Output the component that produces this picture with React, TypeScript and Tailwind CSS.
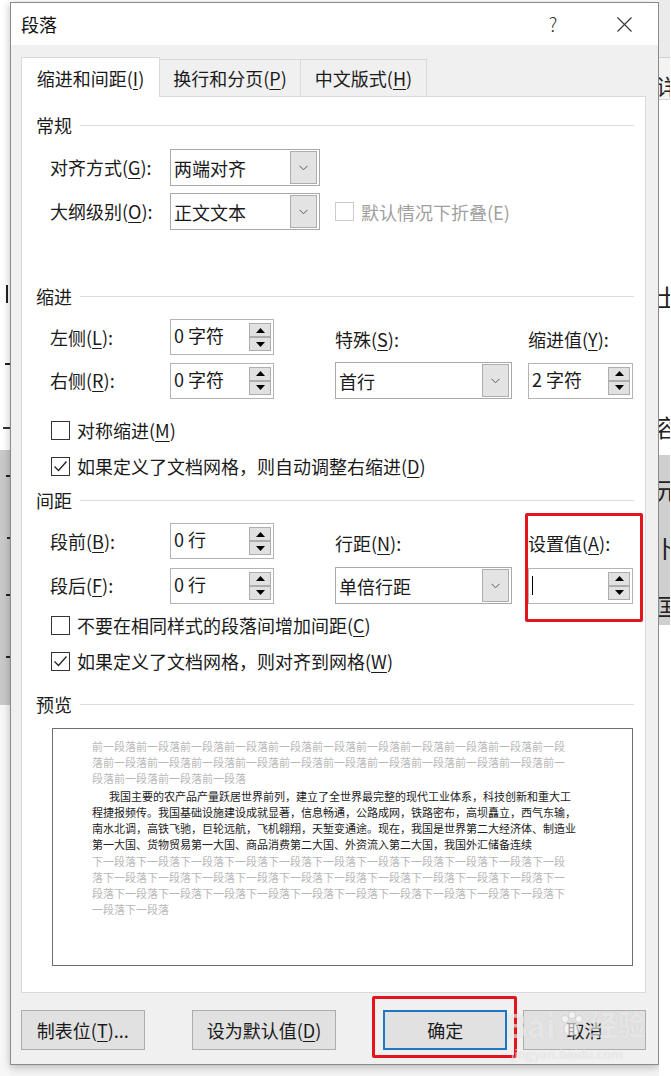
import React from "react";

const T = "text-[18px] leading-[24px] text-[#1a1a1a]";

// 带下划线快捷键的标签，例如 对齐方式(G):
function Lbl({ t, k, colon = true }: { t: string; k: string; colon?: boolean }) {
  return (
    <span className={`${T} whitespace-nowrap`}>
      {t}(<u className="decoration-1 underline-offset-[3px]">{k}</u>){colon ? ":" : ""}
    </span>
  );
}

function Chevron() {
  return (
    <svg width="9" height="6" viewBox="0 0 9 6">
      <path d="M0.5 0.8 L4.5 4.8 L8.5 0.8" stroke="#5a5a5a" strokeWidth="1" fill="none" />
    </svg>
  );
}

function Select({ value, className }: { value: string; className: string }) {
  return (
    <div className={`flex h-[37px] items-center border border-[#a9a9a9] bg-white pl-[3px] pr-[2px] ${className}`}>
      <span className={`flex-1 ${T}`}>{value}</span>
      <div className="flex h-[33px] w-[27px] items-center justify-center border border-[#adadad] bg-[#e3e3e3]">
        <Chevron />
      </div>
    </div>
  );
}

function Spin({ value, className }: { value?: string; className: string }) {
  return (
    <div className={`flex h-[36px] items-center border border-[#b4b4b4] bg-white pl-[3px] pr-[2px] ${className}`}>
      <div className="flex flex-1 items-center">
        {value === undefined ? (
          <span className="h-[19px] w-px bg-black" />
        ) : (
          <span className={`${T} pb-[4px]`}>{value}</span>
        )}
      </div>
      <div className="flex flex-col">
        <div className="flex h-[14px] w-[22px] items-center justify-center border border-[#adadad] bg-[#e1e1e1]">
          <svg width="9" height="5" viewBox="0 0 9 5">
            <polygon points="0,5 4.5,0 9,5" fill="#000" />
          </svg>
        </div>
        <div className="flex h-[14px] w-[22px] items-center justify-center border border-[#adadad] bg-[#e1e1e1]">
          <svg width="9" height="5" viewBox="0 0 9 5">
            <polygon points="0,0 9,0 4.5,5" fill="#000" />
          </svg>
        </div>
      </div>
    </div>
  );
}

function Check({ checked, children, className = "" }: { checked?: boolean; children: React.ReactNode; className?: string }) {
  return (
    <div className={`flex h-[24px] items-center pl-[15px] ${className}`}>
      <div className="flex h-[19px] w-[19px] items-center justify-center border border-[#333333] bg-white">
        {checked && (
          <svg width="15" height="13" viewBox="0 0 15 13">
            <path d="M1.5 6.5 L5.5 10.5 L13.5 1.5" stroke="#222" strokeWidth="1.3" fill="none" />
          </svg>
        )}
      </div>
      <span className="ml-[7px]">{children}</span>
    </div>
  );
}

function Section({ title, className }: { title: string; className: string }) {
  return (
    <div className={`flex h-[24px] items-center ${className}`}>
      <span className={T}>{title}</span>
      <div className="ml-[8px] h-px flex-1 bg-[#dcdcdc]" />
    </div>
  );
}

function Button({ children, className }: { children: React.ReactNode; className: string }) {
  return (
    <div className={`flex h-[40px] items-center justify-center border border-[#adadad] bg-[#e1e1e1] ${T} ${className}`}>
      {children}
    </div>
  );
}

const before = "前一段落".repeat(25);
const after = "下一段落".repeat(34);
const previewGrey = "text-[11px] leading-[16px] text-[#b8b8b8] whitespace-nowrap";
const previewBlack = "text-[11px] leading-[16px] text-[#222222] whitespace-nowrap";

export default function App() {
  return (
    <div className="flex h-[1076px] w-[671px] overflow-hidden bg-white font-['Noto_Sans_CJK_SC','Liberation_Sans',sans-serif]">
      {/* 左侧背景文档 */}
      <div className="flex w-[10px] flex-col">
        <div className="h-[450px] bg-white pt-[285px]">
          <div className="ml-[6px] h-[18px] w-[2px] bg-[#222]" />
          <div className="ml-[5px] mt-[60px] h-[2px] w-[5px] bg-[#222]" />
          <div className="ml-[3px] mt-[62px] h-[2px] w-[7px] bg-[#333]" />
        </div>
        <div className="h-[255px] bg-[#c9c9c9] pt-[25px]">
          <div className="ml-[6px] h-[2px] w-[4px] bg-[#222]" />
          <div className="ml-[7px] mt-[60px] h-[2px] w-[3px] bg-[#222]" />
          <div className="ml-[6px] mt-[55px] h-[2px] w-[4px] bg-[#222]" />
          <div className="ml-[6px] mt-[60px] h-[2px] w-[4px] bg-[#222]" />
        </div>
        <div className="flex-1 bg-[#f7f7f7]" />
      </div>

      <div className="flex w-[649px] flex-col bg-[#f3f3f3]">
        <div className="h-[2px] bg-white" />
        {/* 段落对话框 */}
        <div className="h-[1063px] border border-[#8a8a8a] bg-[#f0f0f0] shadow-[0_2px_8px_rgba(0,0,0,0.25)]">
          <div className="flex h-[42px] items-center bg-white pl-[10px] pr-[11px]">
            <span className="text-[18px] leading-[24px] text-[#111]">段落</span>
            <div className="ml-auto flex items-center gap-[25px]">
              <span className="w-[46px] text-center text-[19px] font-light leading-[24px] text-[#333]">?</span>
              <div className="flex w-[46px] justify-center">
                <svg width="15" height="15" viewBox="0 0 15 15">
                  <path d="M0.5 0.5 L14.5 14.5 M14.5 0.5 L0.5 14.5" stroke="#333" strokeWidth="1.1" />
                </svg>
              </div>
            </div>
          </div>

          <div className="pl-[10px] pr-[12px] pt-[12px]">
            <div className="flex h-[39px] items-end">
              <div className="relative z-10 -mb-px flex h-[40px] w-[139px] items-center justify-center border border-b-0 border-[#d9d9d9] bg-white">
                <Lbl t="缩进和间距" k="I" colon={false} />
              </div>
              <div className="flex h-[37px] w-[141px] items-center justify-center border-r border-t border-[#d9d9d9] bg-[#f0f0f0]">
                <Lbl t="换行和分页" k="P" colon={false} />
              </div>
              <div className="flex h-[37px] w-[126px] items-center justify-center border-r border-t border-[#d9d9d9] bg-[#f0f0f0]">
                <Lbl t="中文版式" k="H" colon={false} />
              </div>
            </div>

            <div className="flex h-[897px] flex-col border border-[#d9d9d9] bg-white pl-[14px] pr-[11px]">
              <Section title="常规" className="mt-[16px]" />
              <div className="mt-[12px] flex h-[37px] items-center">
                <div className="w-[134px] pl-[14px]"><Lbl t="对齐方式" k="G" /></div>
                <Select value="两端对齐" className="w-[150px]" />
              </div>
              <div className="mt-[7px] flex h-[37px] items-center">
                <div className="w-[134px] pl-[14px]"><Lbl t="大纲级别" k="O" /></div>
                <Select value="正文文本" className="w-[150px]" />
                <div className="ml-[15px] h-[19px] w-[19px] border border-[#cccccc] bg-white" />
                <span className={`ml-[7px] text-[18px] leading-[24px] text-[#a0a0a0]`}>默认情况下折叠(E)</span>
              </div>

              <Section title="缩进" className="mt-[54px]" />
              <div className="mt-[11px] flex h-[36px] items-center">
                <div className="w-[134px] pl-[14px]"><Lbl t="左侧" k="L" /></div>
                <Spin value="0 字符" className="w-[104px]" />
                <div className="ml-[61px] w-[193px] pt-[4px]"><Lbl t="特殊" k="S" /></div>
                <div className="pt-[4px]"><Lbl t="缩进值" k="Y" /></div>
              </div>
              <div className="mt-[7px] flex h-[37px] items-center">
                <div className="w-[134px] pl-[14px]"><Lbl t="右侧" k="R" /></div>
                <Spin value="0 字符" className="w-[104px]" />
                <Select value="首行" className="ml-[61px] w-[177px]" />
                <Spin value="2 字符" className="ml-[16px] w-[105px]" />
              </div>
              <Check className="mt-[19px]">
                <Lbl t="对称缩进" k="M" colon={false} />
              </Check>
              <Check checked className="mt-[12px]">
                <Lbl t="如果定义了文档网格，则自动调整右缩进" k="D" colon={false} />
              </Check>

              <Section title="间距" className="mt-[10px]" />
              <div className="relative mt-[11px]">
                <div className="flex h-[36px] items-center">
                  <div className="w-[134px] pl-[14px]"><Lbl t="段前" k="B" /></div>
                  <Spin value="0 行" className="w-[104px]" />
                  <div className="ml-[61px] w-[193px] pt-[4px]"><Lbl t="行距" k="N" /></div>
                  <div className="pt-[4px]"><Lbl t="设置值" k="A" /></div>
                </div>
                <div className="mt-[8px] flex h-[37px] items-center">
                  <div className="w-[134px] pl-[14px]"><Lbl t="段后" k="F" /></div>
                  <Spin value="0 行" className="w-[104px]" />
                  <Select value="单倍行距" className="ml-[61px] w-[177px]" />
                  <Spin className="ml-[16px] w-[105px]" />
                </div>
                {/* 红色标注框 */}
                <div className="pointer-events-none absolute left-[489px] top-[-10px] h-[109px] w-[118px] rounded-[2px] border-[3px] border-[#e3141c]" />
              </div>
              <Check className="mt-[9px]">
                <Lbl t="不要在相同样式的段落间增加间距" k="C" colon={false} />
              </Check>
              <Check checked className="mt-[12px]">
                <Lbl t="如果定义了文档网格，则对齐到网格" k="W" colon={false} />
              </Check>

              <Section title="预览" className="mt-[19px]" />
              <div className="ml-[16px] mr-px mt-[12px] h-[238px] border border-[#6e6e6e] bg-white pl-[39px] pt-[9px]">
                <div className={previewGrey}>{before.slice(0, 43)}</div>
                <div className={previewGrey}>{before.slice(43, 86)}</div>
                <div className={previewGrey}>{before.slice(86)}</div>
                <div className={`${previewBlack} mt-[2px] pl-[17px]`}>
                  我国主要的农产品产量跃居世界前列，建立了全世界最完整的现代工业体系，科技创新和重大工
                </div>
                <div className={previewBlack}>程捷报频传。我国基础设施建设成就显著，信息畅通，公路成网，铁路密布，高坝矗立，西气东输，</div>
                <div className={previewBlack}>南水北调，高铁飞驰，巨轮远航，飞机翱翔，天堑变通途。现在，我国是世界第二大经济体、制造业</div>
                <div className={previewBlack}>第一大国、货物贸易第一大国、商品消费第二大国、外资流入第二大国，我国外汇储备连续</div>
                <div className={`${previewGrey} mt-px`}>{after.slice(0, 43)}</div>
                <div className={previewGrey}>{after.slice(43, 86)}</div>
                <div className={previewGrey}>{after.slice(86, 129)}</div>
                <div className={previewGrey}>{after.slice(129)}</div>
              </div>
            </div>

            <div className="mt-[17px] flex h-[40px]">
              <Button className="w-[124px]">
                制表位(<u className="decoration-1 underline-offset-[3px]">T</u>)...
              </Button>
              <Button className="ml-[47px] w-[145px]">
                设为默认值(<u className="decoration-1 underline-offset-[3px]">D</u>)
              </Button>
              <div className="relative ml-[47px] w-[124px]">
                <div className={`flex h-[40px] items-center justify-center border-2 border-[#1f77c4] bg-[#e1e1e1] ${T}`}>确定</div>
                <div className="pointer-events-none absolute -bottom-[8px] -left-[11px] -right-[10px] -top-[14px] rounded-[2px] border-[3px] border-[#e3141c]" />
              </div>
              <div className="relative ml-[16px] w-[123px]">
                <Button className="w-[123px]">取消</Button>
                {/* 百度经验水印 */}
                <div className="pointer-events-none absolute -left-[18px] -top-[6px] flex items-center text-[32px] font-bold leading-[40px] text-white/60 [text-shadow:0_0_1px_rgba(0,0,0,0.15)]">
                  <span>Bai</span>
                  <svg width="30" height="30" viewBox="0 0 30 30" className="mx-[2px]">
                    <g fill="rgba(255,255,255,0.6)" stroke="rgba(0,0,0,0.12)" strokeWidth="0.8">
                      <circle cx="8" cy="10" r="3.5" />
                      <circle cx="15" cy="6" r="3.5" />
                      <circle cx="22" cy="10" r="3.5" />
                      <ellipse cx="15" cy="20" rx="8" ry="7" />
                    </g>
                  </svg>
                  <span className="text-[28px]">经验</span>
                </div>
                <div className="pointer-events-none absolute -left-[12px] top-[36px] text-[13px] leading-[16px] text-white/70 [text-shadow:0_0_1px_rgba(0,0,0,0.2)]">
                  jingyan.baidu.com
                </div>
              </div>
            </div>
          </div>
        </div>
      </div>

      {/* 右侧背景文档 */}
      <div className="flex w-[11px] flex-col overflow-hidden">
        <div className="h-[58px] border-b border-[#d0d0d0] bg-[#ebebeb]" />
        <div className="h-[42px] border-b border-[#d6d6d6] bg-[#f3f3f3] pt-[14px]">
          <span className="-ml-[3px] block text-[22px] leading-[26px] text-[#222]">详</span>
        </div>
        <div className="h-[355px] bg-white pt-[182px]">
          <span className="-ml-[4px] block text-[24px] leading-[30px] text-[#222]">士</span>
          <span className="-ml-[4px] mt-[100px] block text-[24px] leading-[30px] text-[#222]">容</span>
        </div>
        <div className="h-[170px] bg-[#cfcfcf] pt-[20px]">
          <span className="-ml-[4px] block text-[24px] leading-[30px] text-[#222]">元</span>
          <span className="-ml-[4px] mt-[28px] block text-[24px] leading-[30px] text-[#222]">卜</span>
          <span className="-ml-[4px] mt-[28px] block text-[24px] leading-[30px] text-[#222]">国</span>
        </div>
        <div className="flex-1 bg-white" />
      </div>
    </div>
  );
}
